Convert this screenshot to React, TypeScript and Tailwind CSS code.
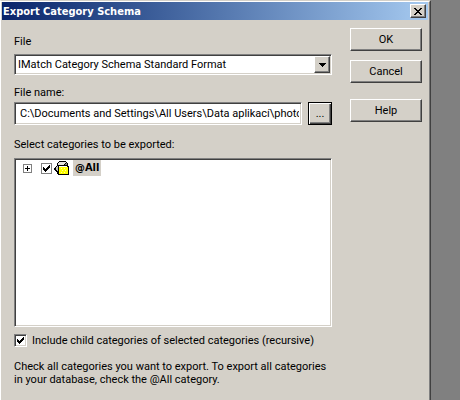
import React, { useState } from "react";

const RAISED =
  "bg-[#d4d0c8] border border-t-white border-l-white border-b-[#404040] border-r-[#404040] shadow-[inset_-1px_-1px_0_#808080]";
const SUNKEN =
  "bg-white border border-t-[#808080] border-l-[#808080] border-b-white border-r-white shadow-[inset_1px_1px_0_#404040,inset_-1px_-1px_0_#d4d0c8]";
const BOLD = "font-['DejaVu_Sans_Condensed','DejaVu_Sans',sans-serif] font-bold";

function Tick() {
  return (
    <svg viewBox="0 0 7 7" shapeRendering="crispEdges" className="pointer-events-none absolute inset-0 m-auto h-[7px] w-[7px]">
      <path d="M0 2h1v1h1v1h1v-1h1v-1h1v-1h1v-1h1v3h-1v1h-1v1h-1v1h-1v1h-1v-1h-1v-1h-1z" />
    </svg>
  );
}

function CategoryIcon() {
  return (
    <svg viewBox="0 0 15 15" shapeRendering="crispEdges" className="block h-[15px] w-[15px]">
      {/* back cards */}
      <path d="M5 0h7v1h1v1h1v4h-9v8h-1v-1h-1v-2h-1v-1h-1v-1h-1v-2h1v-1h1v-1h1v-3h1v-1h1z" fill="#000" />
      <path d="M5 1h7v1h-1v1h-1v1h-6v-2h1z" fill="#e4e2de" />
      <path d="M12 2h1v2h-2v-1h1z" fill="#808080" />
      <path d="M2 6h1v3h-1zM3 5h1v5h-1z" fill="#c0c0c0" />
      {/* front folder */}
      <path d="M4 5h11v9h-10v-1h-1z" fill="#000" />
      <path d="M5 5h8v1h1v7h-9z" fill="#fff" />
      <path d="M5 6h9v7h-9z" fill="#ffff00" />
      <path d="M7 7h1v1h-1zM10 7h1v1h-1zM8 9h1v1h-1zM11 9h1v1h-1zM7 11h1v1h-1zM10 11h1v1h-1z" fill="#ffffa0" />
    </svg>
  );
}

export default function App() {
  const [path, setPath] = useState("C:\\Documents and Settings\\All Users\\Data aplikací\\photoc");
  const [all, setAll] = useState(true);
  const [recursive, setRecursive] = useState(true);

  return (
    <div className="flex min-h-screen bg-[#808080] pr-[29px] font-[Roboto,sans-serif] text-[11px] leading-[13px] text-black">
      <div className="flex min-w-0 flex-1 border-t border-r border-l border-t-[#d4d0c8] border-r-[#404040] border-l-white">
        <div className="min-w-0 flex-1 border-t border-r border-t-white border-r-[#808080] bg-[#d4d0c8] px-px">
          <header className="flex h-[18px] items-center justify-between bg-linear-to-r from-[#0a246a] to-[#a6caf0] pr-0.5 pl-px">
            <h1 className={`whitespace-nowrap text-white ${BOLD}`}>Export Category Schema</h1>
            <button aria-label="Close" className={`flex h-[14px] w-4 items-center justify-center ${RAISED}`}>
              <svg viewBox="0 0 8 7" shapeRendering="crispEdges" className="h-[7px] w-2">
                <path d="M0 0h2v1h1v1h2v-1h1v-1h2v1h-1v1h-1v1h-1v1h1v1h1v1h1v1h-2v-1h-1v-1h-2v1h-1v1h-2v-1h1v-1h1v-1h1v-1h-1v-1h-1v-1h-1z" />
              </svg>
            </button>
          </header>

          <form className="flex gap-[18px] pr-1.5 pl-3" onSubmit={e => e.preventDefault()}>
            <div className="min-w-0 flex-1 pt-[15px]">
              <label htmlFor="format" className="block">File</label>
              <div className="relative mt-1.5">
                <select id="format" className={`block h-[21px] w-full appearance-none rounded-none pl-[3px] outline-none ${SUNKEN}`}>
                  <option>IMatch Category Schema Standard Format</option>
                </select>
                <span className={`pointer-events-none absolute top-0.5 right-0.5 flex h-[17px] w-4 items-center justify-center ${RAISED}`}>
                  <svg viewBox="0 0 7 4" shapeRendering="crispEdges" className="h-1 w-[7px]">
                    <path d="M0 0h7v1h-1v1h-1v1h-1v1h-1v-1h-1v-1h-1v-1h-1z" />
                  </svg>
                </span>
              </div>

              <label htmlFor="path" className="mt-[11px] block">File name:</label>
              <div className="mt-[3px] flex gap-1.5">
                <input
                  id="path"
                  value={path}
                  onChange={e => setPath(e.target.value)}
                  className={`h-[23px] min-w-0 flex-1 pr-0.5 pl-[5px] outline-none ${SUNKEN}`}
                />
                <button aria-label="Browse" className="h-[23px] w-6 border border-black bg-[#d4d0c8] shadow-[inset_1px_1px_0_#fff,inset_-1px_-1px_0_#404040,inset_-2px_-2px_0_#808080]">
                  ...
                </button>
              </div>

              <h2 className="mt-[13px]">Select categories to be exported:</h2>
              <div className={`mt-[7px] h-[169px] overflow-hidden pt-px pl-2 ${SUNKEN}`}>
                <div className="flex h-4 items-center">
                  <button aria-label="Expand @All" className="flex h-[9px] w-[9px] items-center justify-center border border-[#808080]">
                    <svg viewBox="0 0 5 5" shapeRendering="crispEdges" className="h-[5px] w-[5px]">
                      <path d="M2 0h1v2h2v1h-2v2h-1v-2h-2v-1h2z" />
                    </svg>
                  </button>
                  <label htmlFor="all" className="ml-[9px] flex items-center">
                    <span className="relative h-[11px] w-[11px]">
                      <input id="all" type="checkbox" checked={all} onChange={e => setAll(e.target.checked)} className="block h-[11px] w-[11px] appearance-none border border-[#808080] bg-white" />
                      {all && <Tick />}
                    </span>
                    <span className="ml-0.5"><CategoryIcon /></span>
                    <span className={`ml-1 h-4 bg-[#d4d0c8] px-0.5 leading-4 ${BOLD}`}>@All</span>
                  </label>
                </div>
              </div>

              <div className="mt-[7px] flex items-center gap-[5px]">
                <span className="relative h-[13px] w-[13px]">
                  <input id="recursive" type="checkbox" checked={recursive} onChange={e => setRecursive(e.target.checked)} className={`block h-[13px] w-[13px] appearance-none ${SUNKEN}`} />
                  {recursive && <Tick />}
                </span>
                <label htmlFor="recursive" className="whitespace-nowrap">Include child categories of selected categories (recursive)</label>
              </div>
              <p className="mt-[13px] whitespace-nowrap">
                Check all categories you want to export. To export all categories<br />
                in your database, check the @All category.
              </p>
            </div>

            <div className="flex w-[72px] flex-col pt-2">
              <button className={`h-[23px] ${RAISED}`}>OK</button>
              <button className={`mt-[9px] h-[23px] ${RAISED}`}>Cancel</button>
              <button className={`mt-4 h-[23px] ${RAISED}`}>Help</button>
            </div>
          </form>
        </div>
      </div>
    </div>
  );
}
